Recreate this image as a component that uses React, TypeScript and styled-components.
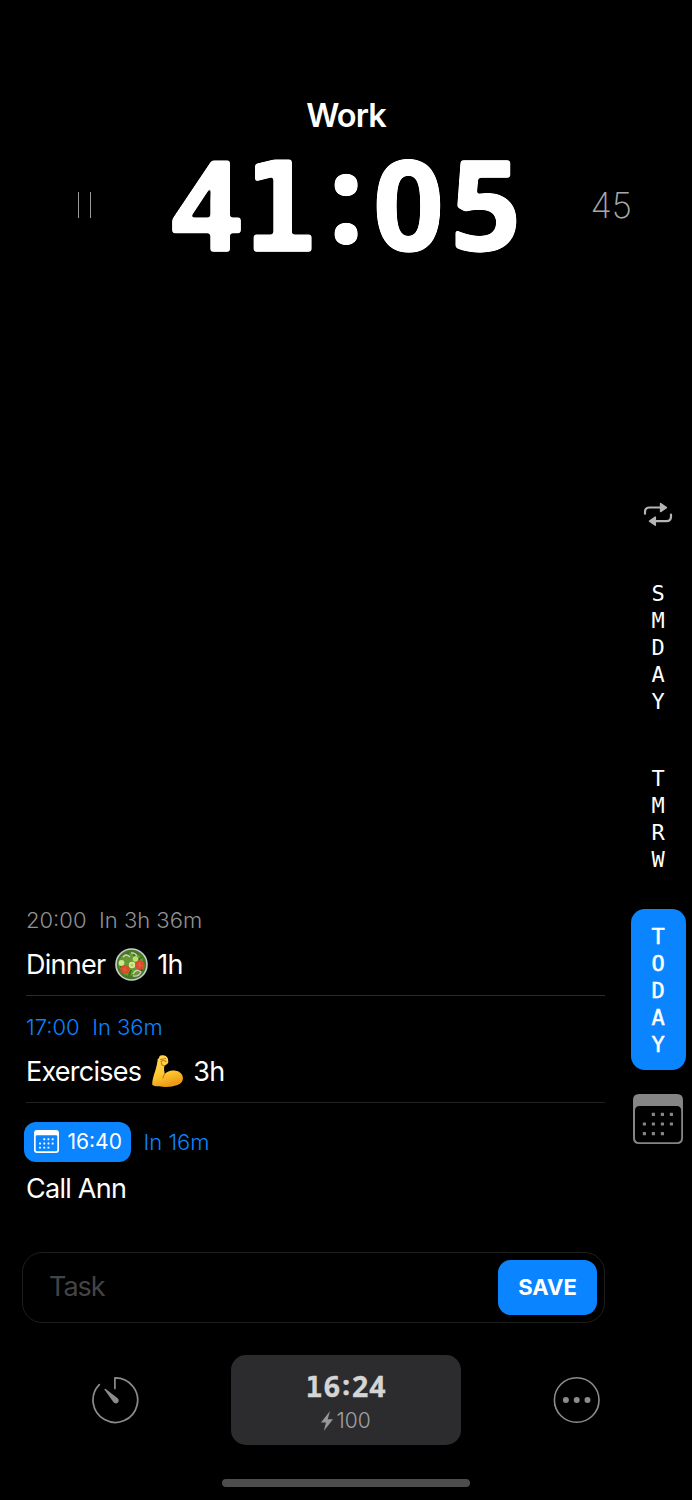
import React from "react";
import styled, { createGlobalStyle, css } from "styled-components";

const BLUE = "#0a84ff";

const GlobalStyle = createGlobalStyle`
  * { box-sizing: border-box; }
  body { margin: 0; background: #000; }
`;

const Screen = styled.div`
  width: 692px;
  height: 1500px;
  display: flex;
  flex-direction: column;
  overflow: hidden;
  background: #000;
  color: #fff;
  font-family: Inter, "Liberation Sans", sans-serif;
`;

const Header = styled.header`
  padding-top: 96px;
  height: 470px;
`;

const Title = styled.h1`
  margin: 0;
  text-align: center;
  font-size: 32.5px;
  line-height: 40px;
  font-weight: 600;
  letter-spacing: -0.9px;
`;

const TimerRow = styled.div`
  display: grid;
  grid-template-columns: 172px 348px 1fr;
  align-items: center;
  height: 138px;
`;

const PauseButton = styled.button`
  display: flex;
  gap: 10.5px;
  margin-left: 78px;
  padding: 0;
  border: 0;
  background: none;
  span { width: 1.3px; height: 26px; background: #999; }
`;

const Total = styled.div`
  padding-left: 70.5px;
  font-size: 35px;
  line-height: 40px;
  font-weight: 200;
  color: #a8a8a8;
  letter-spacing: -0.2px;
`;

const Digits = styled.div<{ $size: number; $color: string; $soft?: boolean }>`
  --pitch: ${(p) => (p.$soft ? 0.618 : 0.61)}em;
  display: flex;
  justify-content: center;
  align-items: baseline;
  font-size: ${(p) => p.$size}px;
  color: ${(p) => p.$color};
  line-height: 1;
  ${(p) => p.$soft && css`filter: url(#soft-corners);`}
`;

const Digit = styled.span`
  flex: none;
  width: var(--pitch);
  text-align: center;
  font-family: "Noto Sans", sans-serif;
  font-weight: 700;
  -webkit-text-stroke: 0.01em currentColor;
`;

const SlabDigit = styled(Digit)`
  font-family: "DejaVu Sans Mono", monospace;
  font-weight: 700;
  transform: translateX(-0.03em) scaleX(0.98);
`;

const Colon = styled(Digit)`
  width: 0.396em;
  font-size: 0.96em;
  -webkit-text-stroke: 0.02em currentColor;
  transform: translateY(-0.075em);
`;

const Body = styled.main`
  display: flex;
  height: 760px;
`;

const Tasks = styled.section`
  width: 605px;
  padding: 0 0 18px 26px;
  display: flex;
  flex-direction: column;
  justify-content: flex-end;
`;

const Task = styled.article<{ $height: number; $top: number; $line?: string }>`
  height: ${(p) => p.$height}px;
  padding-top: ${(p) => p.$top}px;
  border-bottom: ${(p) => (p.$line ? `1px solid ${p.$line}` : "0")};
`;

const Meta = styled.div<{ $color: string; $tall?: boolean }>`
  display: flex;
  align-items: center;
  gap: 12.5px;
  height: ${(p) => (p.$tall ? 40 : 30)}px;
  margin-bottom: ${(p) => (p.$tall ? 6 : 9)}px;
  font-size: 22px;
  font-weight: 300;
  color: ${(p) => p.$color};
  letter-spacing: 0;
`;

const TaskName = styled.div`
  display: flex;
  align-items: center;
  gap: 9.5px;
  height: 40px;
  font-size: 27px;
  font-weight: 400;
  letter-spacing: -0.75px;
`;

const TimeBadge = styled.span`
  display: flex;
  align-items: center;
  gap: 8.5px;
  width: 107px;
  height: 40px;
  margin-left: -2px;
  padding: 0 0 1px 10px;
  border-radius: 12px;
  background: ${BLUE};
  color: #fff;
  font-weight: 400;
  font-size: 21px;
`;

const Sidebar = styled.nav`
  width: 68px;
  margin-left: 19px;
  padding-top: 32px;
  display: flex;
  flex-direction: column;
  align-items: center;
  svg { flex: none; }
`;

const DayTab = styled.div<{ $top: number; $active?: boolean }>`
  margin-top: ${(p) => p.$top}px;
  width: 55px;
  padding: ${(p) => (p.$active ? "14px 0 12px" : "0")};
  border-radius: 14px;
  background: ${(p) => (p.$active ? BLUE : "transparent")};
  display: flex;
  flex-direction: column;
  align-items: center;
  font-family: "DejaVu Sans Mono", monospace;
  font-size: 22px;
  line-height: 27px;
  -webkit-text-stroke: ${(p) => (p.$active ? 0.5 : 0)}px #fff;
`;

const CalendarSlot = styled.div`
  margin-top: 24px;
  height: 51px;
`;

const Composer = styled.form`
  width: 583px;
  height: 71px;
  margin: 22px 0 0 22px;
  padding: 0 7px 0 26px;
  display: flex;
  align-items: center;
  justify-content: space-between;
  border: 1px solid #1e1e1f;
  border-radius: 20px;
`;

const Placeholder = styled.span`
  padding-bottom: 2px;
  font-size: 27px;
  line-height: 32px;
  letter-spacing: -1px;
  color: #444446;
`;

const SaveButton = styled.button`
  width: 99px;
  height: 55px;
  padding: 0;
  border: 0;
  border-radius: 13px;
  background: ${BLUE};
  color: #fff;
  font: 700 22px/55px Inter, sans-serif;
`;

const BottomBar = styled.footer`
  display: flex;
  align-items: center;
  justify-content: space-between;
  height: 90px;
  margin: 32px 91px 0;
  svg { display: block; }
`;

const StatusCard = styled.div`
  width: 230px;
  height: 90px;
  padding-top: 17px;
  border-radius: 15px;
  background: #2c2c2e;
`;

const Battery = styled.div`
  display: flex;
  justify-content: center;
  align-items: center;
  gap: 3px;
  height: 36px;
  font-size: 21px;
  font-weight: 300;
  color: #a0a0a2;
`;

const HomeIndicator = styled.div`
  width: 248px;
  height: 8px;
  margin: 34px auto 0;
  border-radius: 4px;
  background: #4d4d4d;
`;

const FilterDefs = styled.svg`
  position: absolute;
`;

function Clock({ value, size, color, soft }: { value: string; size: number; color: string; soft?: boolean }) {
  return (
    <Digits $size={size} $color={color} $soft={soft}>
      {value.split("").map((c, i) => {
        const Glyph = c === "1" ? SlabDigit : c === ":" ? Colon : Digit;
        return <Glyph key={i}>{c}</Glyph>;
      })}
    </Digits>
  );
}

/* Rounds the corners of the large digits: blur, then sharpen the alpha edge. */
function SoftCorners() {
  return (
    <FilterDefs width="0" height="0" aria-hidden="true">
      <filter id="soft-corners" x="-5%" y="-5%" width="110%" height="110%" colorInterpolationFilters="sRGB">
        <feGaussianBlur stdDeviation="1.8" />
        <feColorMatrix values="1 0 0 0 0  0 1 0 0 0  0 0 1 0 0  0 0 0 5 -2" />
      </filter>
    </FilterDefs>
  );
}

const DOTS = [[1, 0], [2, 0], [3, 0], [0, 1], [1, 1], [2, 1], [3, 1], [0, 2], [1, 2], [2, 2]];

function LargeCalendar() {
  return (
    <svg width="51" height="51" viewBox="0 0 51 51" fill="#858585">
      <path fillRule="evenodd" d="M6 0H44Q50 0 50 6V44Q50 50 44 50H6Q0 50 0 44V6Q0 0 6 0ZM6.500 12Q2 12 2 16.500V43.500Q2 48.200 6.500 48.200H43.500Q48.200 48.200 48.200 43.500V16.500Q48.200 12 43.500 12Z" />
      {DOTS.map(([x, y]) => (
        <rect key={`${x}${y}`} x={9.800 + x * 9} y={18.800 + y * 9.600} width="3.200" height="3.200" rx=".5" />
      ))}
    </svg>
  );
}

function SmallCalendar() {
  return (
    <svg width="25" height="23" viewBox="0 0 25 23" fill="#fff">
      <path fillRule="evenodd" d="M3 0H22Q25 0 25 3V20Q25 23 22 23H3Q0 23 0 20V3Q0 0 3 0ZM3 5.300Q1.700 5.300 1.700 6.600V19.700Q1.700 21.300 3.300 21.300H21.700Q23.300 21.300 23.300 19.700V6.600Q23.300 5.300 22 5.300Z" />
      {DOTS.map(([x, y]) => (
        <rect key={`${x}${y}`} x={5.100 + x * 4.200} y={8.300 + y * 4.200} width="1.900" height="1.900" rx=".4" />
      ))}
    </svg>
  );
}

function RepeatIcon() {
  return (
    <svg width="30" height="24" viewBox="0 0 30 24" fill="none" stroke="#b5b5b5" strokeWidth="2.200" strokeLinecap="round" strokeLinejoin="round">
      <path d="M2 11.700V10Q2 5.500 6.500 5.500H18" />
      <path d="M28 12.500V14.500Q28 19.200 23.500 19.200H12" />
      <path d="M17.600 1.500V9.600L23.400 5.600ZM12.300 15.100V23.200L6.500 19.200Z" fill="#b5b5b5" strokeWidth="1.500" />
    </svg>
  );
}

function Salad() {
  return (
    <svg width="33" height="33" viewBox="0 0 33 33">
      <circle cx="16.500" cy="16.500" r="16.300" fill="#c9ced0" />
      <circle cx="16.500" cy="16.500" r="14.700" fill="#477a24" />
      <path d="M5 11Q8 5 13 7Q17 2 22 7Q29 8 28 14Q32 20 26 23Q22 30 15 27Q8 29 6 22Q1 17 5 11Z" fill="#659b32" />
      <path d="M12 5L14 8M20 4L19 8M27 9L23 12M5 19L8 18M14 27L16 22M28 23L24 21" stroke="#3c6d20" strokeWidth="2" />
      <path d="M8 9Q11 5 15 9M16 5Q20 4 22 8M18 26Q21 20 26 24Q24 29 18 28" fill="none" stroke="#dfc4ce" strokeWidth="1.300" />
      <circle cx="6.500" cy="15" r="2.900" fill="#d0e68a" />
      <circle cx="20.500" cy="11" r="2.800" fill="#bddd74" />
      <circle cx="17" cy="17" r="3.200" fill="#d7ea9a" />
      <circle cx="10" cy="21.500" r="4.600" fill="#d94b2b" />
      <circle cx="24.800" cy="17" r="4.700" fill="#dc492c" />
      <path d="M7.500 20.500L12.500 22.500M10.500 18.500L9.500 24M22.500 16L27.500 18M25 14L24.500 20" stroke="#e66a45" strokeWidth=".8" />
      <circle cx="17" cy="17" r="1.500" fill="#aecb63" />
    </svg>
  );
}

function Biceps() {
  return (
    <svg width="33" height="34" viewBox="0 0 33 34">
      <defs>
        <linearGradient id="skin" x1="0" y1="0" x2="0.300" y2="1">
          <stop offset="0" stopColor="#ffda55" />
          <stop offset=".65" stopColor="#ffc832" />
          <stop offset="1" stopColor="#ed9c17" />
        </linearGradient>
      </defs>
      <path d="M8 4Q8 1.500 11 1.200Q15 .7 16.800 4.200Q18 8 16.500 9.800Q14.500 11.500 13.300 11.700Q12.500 15 13.700 20Q17.500 15.800 23.500 16.500Q31.500 17.500 32 24Q32 29 26.500 31Q18 34 8 32.300Q2 32.500 1.200 30.500Q1 26 4.500 16Q6 11 6.500 7Q6 5 8 4Z" fill="url(#skin)" />
      <path d="M9.500 5.500L14.500 4.500M10 7.500Q12 5.500 15 7.500M13.300 11.700Q10 11.500 10.500 8.500M13.700 20Q12.300 21.500 12 24" fill="none" stroke="#c97915" strokeWidth="1.100" strokeLinecap="round" />
    </svg>
  );
}

function TimerIcon() {
  return (
    <svg width="48" height="48" viewBox="0 0 48 48" fill="none" stroke="#8c8c8c" strokeWidth="1.700">
      <path d="M23.900 12.500V1.800A22.300 22.300 0 1 1 8.300 8.600" strokeLinecap="round" strokeLinejoin="round" />
      <path d="M13.200 13.200Q13.900 12.400 14.700 13L26.400 22Q28.700 24 27 26.500Q24.700 28.500 22.500 26.300Z" fill="#8c8c8c" stroke="none" />
    </svg>
  );
}

function MoreIcon() {
  return (
    <svg width="48" height="48" viewBox="0 0 48 48" fill="#8c8c8c">
      <circle cx="23.700" cy="24" r="22.300" fill="none" stroke="#8c8c8c" strokeWidth="1.600" />
      {[12.900, 23.700, 34.500].map((x) => <circle key={x} cx={x} cy="24" r="3" />)}
    </svg>
  );
}

function DayLetters({ word }: { word: string }) {
  return <>{word.split("").map((c, i) => <span key={i}>{c}</span>)}</>;
}

export default function App() {
  return (
    <Screen>
      <GlobalStyle />
      <SoftCorners />
      <Header>
        <Title>Work</Title>
        <TimerRow>
          <PauseButton aria-label="Pause"><span /><span /></PauseButton>
          <Clock value="41:05" size={125} color="#fff" soft />
          <Total>45</Total>
        </TimerRow>
      </Header>
      <Body>
        <Tasks>
          <Task $height={91} $top={0} $line="#2b2b2b">
            <Meta $color="#929292"><span>20:00</span><span>In 3h 36m</span></Meta>
            <TaskName><span>Dinner</span><Salad /><span>1h</span></TaskName>
          </Task>
          <Task $height={107} $top={16} $line="#202020">
            <Meta $color={BLUE}><span>17:00</span><span>In 36m</span></Meta>
            <TaskName><span>Exercises</span><Biceps /><span>3h</span></TaskName>
          </Task>
          <Task $height={109} $top={19}>
            <Meta $color={BLUE} $tall><TimeBadge><SmallCalendar />16:40</TimeBadge><span>In 16m</span></Meta>
            <TaskName><span>Call Ann</span></TaskName>
          </Task>
        </Tasks>
        <Sidebar>
          <RepeatIcon />
          <DayTab $top={53.5}><DayLetters word="SMDAY" /></DayTab>
          <DayTab $top={50}><DayLetters word="TMRW" /></DayTab>
          <DayTab $top={36.5} $active><DayLetters word="TODAY" /></DayTab>
          <CalendarSlot><LargeCalendar /></CalendarSlot>
        </Sidebar>
      </Body>
      <Composer>
        <Placeholder>Task</Placeholder>
        <SaveButton type="button">SAVE</SaveButton>
      </Composer>
      <BottomBar>
        <TimerIcon />
        <StatusCard>
          <Clock value="16:24" size={28.5} color="#d5d5d6" />
          <Battery>
            <svg width="12" height="20" viewBox="0 0 12 20" fill="#98989a"><path d="M9 0L0 11.500H5L2.800 20L12 8.200H6.700Z" /></svg>
            <span>100</span>
          </Battery>
        </StatusCard>
        <MoreIcon />
      </BottomBar>
      <HomeIndicator />
    </Screen>
  );
}
